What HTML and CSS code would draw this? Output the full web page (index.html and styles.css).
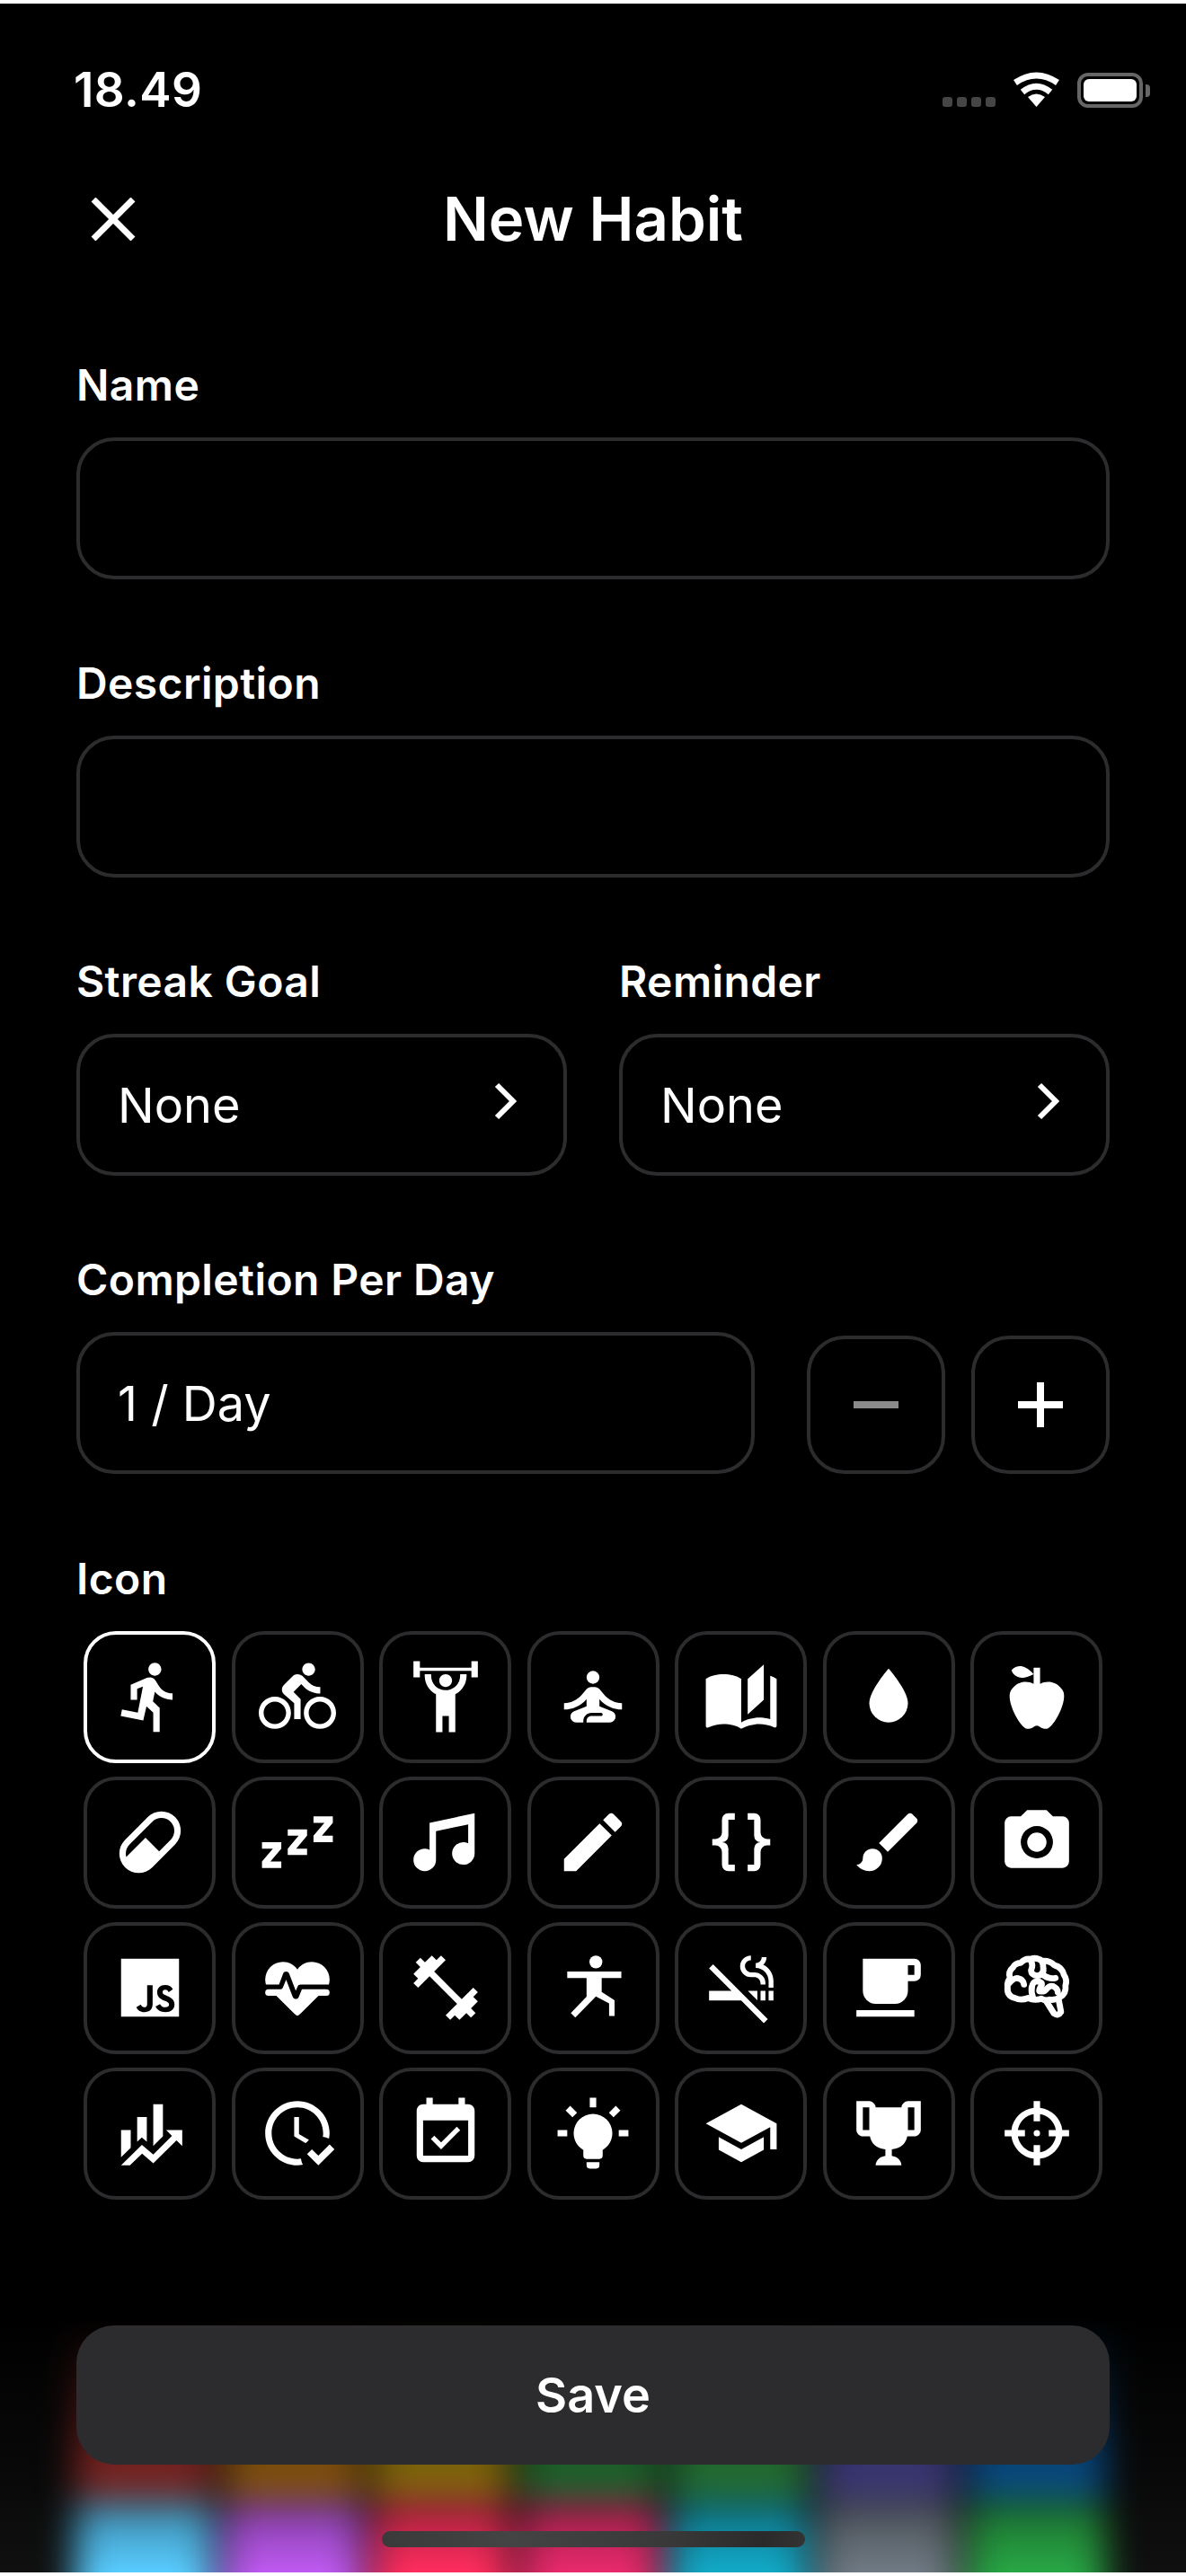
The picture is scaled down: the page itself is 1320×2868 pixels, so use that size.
FILE: index.html
```html
<!DOCTYPE html>
<html lang="en">
<head>
<meta charset="utf-8">
<title>New Habit</title>
<link rel="stylesheet" href="styles.css">
</head>
<body>
<main class="screen">
  <div class="backdrop">
    <div class="swatches">
      <span class="sw c1"></span><span class="sw c2"></span><span class="sw c3"></span><span class="sw c4"></span><span class="sw c5"></span><span class="sw c6"></span><span class="sw c7"></span>
      <span class="sw c8"></span><span class="sw c9"></span><span class="sw c10"></span><span class="sw c11"></span><span class="sw c12"></span><span class="sw c13"></span><span class="sw c14"></span>
    </div>
    <div class="fade"></div>
  </div>

  <header class="status">
    <span class="time">18.49</span>
    <div class="status-icons">
      <div class="signal"><i></i><i></i><i></i><i></i></div>
      <svg class="wifi" viewBox="0 0 53 39"><path class="arc" d="M3 12Q26.500-4 50 12"/><path class="arc" d="M11 22.500Q26.500 10 42 22.500"/><path d="M26.500 39L17 28Q26.500 21 36 28Z"/></svg>
      <div class="battery"><div class="battery-body"><div class="battery-fill"></div></div><div class="battery-nub"></div></div>
    </div>
  </header>

  <div class="navbar">
    <svg class="close" viewBox="0 0 50 48"><path d="M3 2L47 46M47 2L3 46"/></svg>
    <h1 class="title">New Habit</h1>
  </div>

  <form class="form">
    <div class="section">
      <label class="label">Name</label>
      <div class="box"></div>
    </div>
    <div class="section">
      <label class="label">Description</label>
      <div class="box"></div>
    </div>
    <div class="section two-col">
      <div class="col">
        <label class="label">Streak Goal</label>
        <div class="box select"><span>None</span><svg class="chev" viewBox="0 0 26 42"><path d="M4 3L22 21L4 39"/></svg></div>
      </div>
      <div class="col">
        <label class="label">Reminder</label>
        <div class="box select"><span>None</span><svg class="chev" viewBox="0 0 26 42"><path d="M4 3L22 21L4 39"/></svg></div>
      </div>
    </div>
    <div class="section">
      <label class="label">Completion Per Day</label>
      <div class="stepper">
        <div class="box value">1 / Day</div>
        <div class="step"><svg class="sign minus" viewBox="0 0 50 50"><path d="M0 25H50"/></svg></div>
        <div class="step"><svg class="sign" viewBox="0 0 50 50"><path d="M0 25H50M25 0V50"/></svg></div>
      </div>
    </div>
    <div class="section">
      <label class="label">Icon</label>
      <div class="icons">
        <div class="tile selected"><svg viewBox="0 0 24 24"><path d="M13.49 5.48c1.1 0 2-.9 2-2s-.9-2-2-2-2 .9-2 2 .9 2 2 2zm-3.6 13.9l1-4.4 2.1 2v6h2v-7.5l-2.1-2 .6-3c1.3 1.5 3.3 2.5 5.5 2.500v-2c-1.900 0-3.500-1-4.300-2.400l-1-1.600c-.4-.6-1-1-1.700-1-.3 0-.5.1-.8.1l-5.200 2.200v4.700h2v-3.400l1.800-.7-1.600 8.100-4.900-1-.4 2 7 1.400z"/></svg></div>
        <div class="tile"><svg viewBox="0 0 24 24"><path d="M15.5 5.500c1.100 0 2-.9 2-2s-.9-2-2-2-2 .9-2 2 .9 2 2 2zM5 12c-2.800 0-5 2.200-5 5s2.200 5 5 5 5-2.200 5-5-2.200-5-5-5zm0 8.500c-1.900 0-3.500-1.600-3.500-3.500s1.600-3.500 3.500-3.500 3.500 1.600 3.500 3.500-1.600 3.500-3.500 3.500zm5.800-10l2.400-2.400.8.8c1.300 1.300 3 2.100 5.100 2.100V9c-1.500 0-2.700-.6-3.600-1.500l-1.900-1.900c-.5-.4-1-.6-1.600-.6s-1.100.2-1.400.6L7.800 8.400c-.4.4-.6.9-.6 1.400 0 .6.2 1.100.6 1.400L11 14v5h2v-6.200l-2.200-2.300zM19 12c-2.800 0-5 2.200-5 5s2.200 5 5 5 5-2.200 5-5-2.200-5-5-5zm0 8.500c-1.900 0-3.500-1.600-3.500-3.500s1.600-3.500 3.500-3.500 3.500 1.600 3.500 3.500-1.600 3.500-3.500 3.500z"/></svg></div>
        <div class="tile"><svg viewBox="0 0 24 24"><path d="M12 5C10.890 5 10 5.890 10 7S10.890 9 12 9 14 8.110 14 7 13.110 5 12 5M22 1V6H20V4H4V6H2V1H4V3H20V1H22M15 11.260V23H13V18H11V23H9V11.260C6.930 10.170 5.500 8 5.500 5.500L5.500 5H7.500L7.500 5.500C7.500 8 9.500 10 12 10S16.500 8 16.500 5.500L16.500 5H18.500L18.500 5.500C18.500 8 17.070 10.170 15 11.260Z"/></svg></div>
        <div class="tile"><svg viewBox="0 0 24 24"><circle cx="12" cy="6" r="2"/><path d="M21 16v-2c-2.240 0-4.160-.96-5.600-2.680l-1.340-1.600c-.38-.46-.94-.72-1.530-.72h-1.050c-.59 0-1.150.26-1.530.72l-1.340 1.600C7.160 13.040 5.240 14 3 14v2c2.770 0 5.190-1.170 7-3.250V15l-3.880 1.550c-.67.27-1.120.93-1.120 1.650C5 19.200 5.800 20 6.800 20H9v-.5c0-1.380 1.120-2.500 2.500-2.500h3c.28 0 .5.220.5.5s-.22.5-.5.5h-3c-.83 0-1.500.67-1.500 1.500v.5h7.200c1 0 1.800-.8 1.800-1.800 0-.72-.45-1.380-1.120-1.650L14 15v-2.250c1.810 2.080 4.230 3.250 7 3.250z"/></svg></div>
        <div class="tile"><svg viewBox="0 0 24 24"><path d="M19 2L14 6.500V17.500L19 13V2M6.500 5C4.550 5 2.450 5.400 1 6.500V21.160C1 21.410 1.250 21.660 1.500 21.660C1.600 21.660 1.650 21.590 1.750 21.590C3.100 20.940 5.050 20.500 6.500 20.500C8.450 20.500 10.550 20.900 12 22C13.350 21.150 15.800 20.500 17.500 20.500C19.150 20.500 20.850 20.810 22.250 21.560C22.350 21.610 22.400 21.590 22.500 21.590C22.750 21.590 23 21.340 23 21.090V6.500C22.400 6.050 21.750 5.750 21 5.500V19C19.900 18.650 18.700 18.500 17.500 18.500C15.800 18.500 13.350 19.150 12 20V6.500C10.550 5.400 8.450 5 6.500 5Z"/></svg></div>
        <div class="tile"><svg viewBox="0 0 24 24"><path d="M12,20A6,6 0 0,1 6,14C6,10 12,3.250 12,3.250C12,3.250 18,10 18,14A6,6 0 0,1 12,20Z"/></svg></div>
        <div class="tile"><svg viewBox="0 0 24 24"><path d="M20,10C22,13 17,22 15,22C13,22 13,21 12,21C11,21 11,22 9,22C7,22 2,13 4,10C6,7 9,7 11,8V5C5.380,8.070 4.110,3.780 4.110,3.780C4.110,3.780 6.770,0.190 11,5V3H13V8C15,7 18,7 20,10Z"/></svg></div>

        <div class="tile"><svg viewBox="0 0 24 24"><path d="M4.220,11.290L11.290,4.220C13.640,1.880 17.430,1.880 19.780,4.220C22.120,6.560 22.120,10.360 19.780,12.710L12.710,19.780C10.360,22.120 6.560,22.120 4.220,19.780C1.880,17.430 1.880,13.640 4.220,11.290M5.640,12.710C4.590,13.750 4.240,15.240 4.600,16.570L10.590,10.590L14.830,14.830L18.360,11.290C19.930,9.730 19.930,7.200 18.360,5.640C16.800,4.070 14.270,4.070 12.710,5.640L5.640,12.710Z"/></svg></div>
        <div class="tile"><svg viewBox="0 0 24 24"><path d="M23,12H17V10L20.390,6H17V4H23V6L19.620,10H23V12M15,16H9V14L12.390,10H9V8H15V10L11.620,14H15V16M7,20H1V18L4.390,14H1V12H7V14L3.620,18H7V20Z"/></svg></div>
        <div class="tile"><svg viewBox="0 0 24 24"><path d="M21,3V15.500A3.500,3.500 0 0,1 17.500,19A3.500,3.500 0 0,1 14,15.500A3.500,3.500 0 0,1 17.500,12C18.040,12 18.550,12.120 19,12.340V6.470L9,8.600V17.500A3.500,3.500 0 0,1 5.500,21A3.500,3.500 0 0,1 2,17.500A3.500,3.500 0 0,1 5.500,14C6.040,14 6.550,14.120 7,14.340V6L21,3Z"/></svg></div>
        <div class="tile"><svg viewBox="0 0 24 24"><path d="M20.710,7.040C21.100,6.650 21.100,6 20.710,5.630L18.370,3.290C18,2.900 17.350,2.900 16.960,3.290L15.120,5.120L18.870,8.870M3,17.250V21H6.750L17.810,9.930L14.060,6.180L3,17.250Z"/></svg></div>
        <div class="tile"><svg viewBox="0 0 24 24"><path d="M8,3A2,2 0 0,0 6,5V9A2,2 0 0,1 4,11H3V13H4A2,2 0 0,1 6,15V19A2,2 0 0,0 8,21H10V19H8V14A2,2 0 0,0 6,12A2,2 0 0,0 8,10V5H10V3M16,3A2,2 0 0,1 18,5V9A2,2 0 0,0 20,11H21V13H20A2,2 0 0,0 18,15V19A2,2 0 0,1 16,21H14V19H16V14A2,2 0 0,1 18,12A2,2 0 0,1 16,10V5H14V3H16Z"/></svg></div>
        <div class="tile"><svg viewBox="0 0 24 24"><path d="M20.710,4.630L19.370,3.290C19,2.900 18.350,2.900 17.960,3.290L9,12.250L11.750,15L20.710,6.040C21.100,5.650 21.100,5 20.710,4.630M7,14A3,3 0 0,0 4,17C4,18.310 2.840,19 2,19C2.920,20.220 4.500,21 6,21A4,4 0 0,0 10,17A3,3 0 0,0 7,14Z"/></svg></div>
        <div class="tile"><svg viewBox="0 0 24 24"><path d="M4,4H7L9,2H15L17,4H20A2,2 0 0,1 22,6V18A2,2 0 0,1 20,20H4A2,2 0 0,1 2,18V6A2,2 0 0,1 4,4M12,7A5,5 0 0,0 7,12A5,5 0 0,0 12,17A5,5 0 0,0 17,12A5,5 0 0,0 12,7M12,9A3,3 0 0,1 15,12A3,3 0 0,1 12,15A3,3 0 0,1 9,12A3,3 0 0,1 12,9Z"/></svg></div>

        <div class="tile"><svg viewBox="0 0 24 24"><path d="M3,3H21V21H3V3M7.730,18.040C8.130,18.890 8.920,19.590 10.270,19.590C11.770,19.590 12.800,18.790 12.800,17.040V11.260H11.100V17C11.100,17.860 10.750,18.080 10.200,18.080C9.620,18.080 9.380,17.680 9.120,17.220L7.730,18.040M13.710,17.860C14.210,18.840 15.220,19.590 16.800,19.590C18.400,19.590 19.600,18.760 19.600,17.230C19.600,15.820 18.790,15.190 17.350,14.570L16.930,14.390C16.200,14.080 15.890,13.870 15.890,13.370C15.890,12.960 16.200,12.640 16.700,12.640C17.180,12.640 17.500,12.850 17.790,13.370L19.100,12.500C18.550,11.540 17.770,11.170 16.700,11.170C15.190,11.170 14.220,12.130 14.220,13.400C14.220,14.780 15.030,15.430 16.250,15.950L16.670,16.130C17.450,16.470 17.910,16.680 17.910,17.260C17.910,17.740 17.460,18.090 16.760,18.090C15.930,18.090 15.450,17.660 15.090,17.060L13.710,17.860Z"/></svg></div>
        <div class="tile"><svg viewBox="0 0 24 24"><path d="M7.500,4A5.500,5.500 0 0,0 2,9.500C2,10 2.090,10.500 2.220,11H6.300L7.570,7.630C7.870,6.830 9.050,6.750 9.430,7.630L11.500,13L12.090,11.580C12.220,11.250 12.570,11 13,11H21.780C21.910,10.500 22,10 22,9.500A5.500,5.500 0 0,0 16.500,4C14.640,4 13,4.930 12,6.340C11,4.930 9.360,4 7.500,4V4M3,12.500A1,1 0 0,0 2,13.500A1,1 0 0,0 3,14.500H5.440L11,20C12,20.900 12,20.900 13,20L18.560,14.500H21A1,1 0 0,0 22,13.500A1,1 0 0,0 21,12.500H13.400L12.470,14.800C12.070,15.810 10.920,15.670 10.550,14.830L8.500,9.500L7.540,11.830C7.390,12.210 7.050,12.500 6.600,12.500H3Z"/></svg></div>
        <div class="tile"><svg viewBox="0 0 24 24"><path d="M20.570,14.860L22,13.430L20.570,12L17,15.570L8.430,7L12,3.430L10.570,2L9.140,3.430L7.710,2L5.570,4.140L4.140,2.710L2.710,4.140L4.140,5.570L2,7.710L3.430,9.140L2,10.570L3.430,12L7,8.430L15.570,17L12,20.570L13.430,22L14.860,20.570L16.290,22L18.430,19.860L19.860,21.290L21.290,19.860L19.860,18.430L22,16.290L20.570,14.860Z"/></svg></div>
        <div class="tile"><svg viewBox="0 0 24 24"><circle cx="12.900" cy="4" r="2"/><path d="M4 7H20.800V9H14.700V13.300L18.700 15.900V20.800H17V16.900L12.900 14.700L6.500 21.300L5.100 19.900L10 14.800V9H4Z"/></svg></div>
        <div class="tile"><svg viewBox="0 0 24 24"><path d="M2 6l6.990 7H2v3h9.990l7 7 1.260-1.250-17-17zm18.500 7H22v3h-1.500zM18 13h1.500v3H18zm.85-8.120c.62-.61 1-1.450 1-2.380h-1.500c0 1.020-.83 1.850-1.850 1.850v1.500c2.240 0 4 1.830 4 4.070V12H22V9.920c0-2.230-1.280-4.150-3.150-5.040zM14.500 8.700h1.530c1.050 0 1.970.74 1.970 2.050V11h1.500v-.59c0-1.800-1.600-3.160-3.470-3.160H15c-1.020 0-1.850-.98-1.850-2s.83-1.750 1.850-1.750V2a3.350 3.350 0 0 0 0 6.700zm2.500 7.230V13h-2.930z"/></svg></div>
        <div class="tile"><svg viewBox="0 0 24 24"><path d="M2,21H20V19H2M20,8H18V5H20M20,3H4V13A4,4 0 0,0 8,17H14A4,4 0 0,0 18,13V10H20A2,2 0 0,0 22,8V5C22,3.890 21.100,3 20,3Z"/></svg></div>
        <div class="tile"><svg class="line" viewBox="0 0 24 24"><path d="M5.200 15.200Q2.600 14.600 2.900 11.800Q2.700 10 3.700 9.100Q2.900 7.100 4.600 5.700Q5.200 4.400 7 4.300Q8.200 2.900 10 3.100Q11.900 2.400 13.600 3.700Q16 3.500 17.400 5Q19.800 5.600 20.400 8Q21.500 9.600 20.900 11.300Q21.200 13.900 19.200 14.900Q17.800 16 16 15.700Q14.800 16.200 13.400 15.400Q11.200 16.200 9.300 15.200Q7 16.100 5.200 15.200Z"/><path d="M14.800 16L17.300 20Q18.600 21 19.500 19.500L18.700 15.300"/><path d="M10 3.300Q11 5 10.200 6.600Q10.300 8.100 12.200 8.300Q14.200 8 14 6Q14 4.600 13.600 3.800"/><path d="M13.800 8Q16 9.500 17.800 9"/><path d="M10.400 12Q10.700 10.200 11.800 10.100Q13.800 10 13.500 11.200Q12.500 12.600 12.800 13.100Q14.300 13.400 15 12.400Q16 11.300 16.900 11.500Q18.500 12.200 18.500 13.400"/><path d="M10.400 12Q10.200 13.800 10.800 15"/><path d="M3.400 10.600Q5 8.800 6.200 9.100Q7.800 9.400 8 11"/></svg></div>

        <div class="tile"><svg viewBox="0 0 24 24"><path d="M6,16.500L3,19.440V11H6M11,14.660L9.430,13.320L8,14.640V7H11M16,13L13,16V3H16M18.810,12.810L17,11H22V16L20.210,14.210L13,21.360L9.530,18.340L5.750,22H3L9.470,15.660L13,18.640"/></svg></div>
        <div class="tile"><svg viewBox="0 0 24 24"><path d="M23.500 17L18.500 22L15 18.500L16.500 17L18.500 19L22 15.500L23.500 17M13.100 19.900C12.700 20 12.400 20 12 20C7.600 20 4 16.400 4 12S7.600 4 12 4 20 7.600 20 12C20 12.400 20 12.700 19.900 13.100C20.600 13.200 21.200 13.400 21.800 13.700C21.900 13.100 22 12.600 22 12C22 6.500 17.500 2 12 2S2 6.500 2 12C2 17.500 6.500 22 12 22C12.600 22 13.200 21.900 13.700 21.800C13.400 21.300 13.200 20.600 13.100 19.900M15.600 14.100L12.500 12.300V7H11V13L14.500 15.100C14.800 15 15.200 14.500 15.600 14.100Z"/></svg></div>
        <div class="tile"><svg viewBox="0 0 24 24"><path d="M19,19H5V8H19M19,3H18V1H16V3H8V1H6V3H5C3.890,3 3,3.900 3,5V19A2,2 0 0,0 5,21H19A2,2 0 0,0 21,19V5A2,2 0 0,0 19,3M16.530,11.060L15.470,10L10.590,14.880L8.470,12.760L7.410,13.820L10.590,17L16.530,11.060Z"/></svg></div>
        <div class="tile"><svg viewBox="0 0 24 24"><path d="M12,6A6,6 0 0,1 18,12C18,14.220 16.790,16.160 15,17.200V19A1,1 0 0,1 14,20H10A1,1 0 0,1 9,19V17.200C7.210,16.160 6,14.220 6,12A6,6 0 0,1 12,6M14,21V22A1,1 0 0,1 13,23H11A1,1 0 0,1 10,22V21H14M20,11H23V13H20V11M1,11H4V13H1V11M13,1V4H11V1H13M4.920,3.500L7.050,5.640L5.630,7.050L3.500,4.930L4.920,3.500M16.950,5.630L19.070,3.500L20.500,4.930L18.370,7.050L16.950,5.630Z"/></svg></div>
        <div class="tile"><svg viewBox="0 0 24 24"><path d="M12,3L1,9L12,15L21,10.090V17H23V9M5,13.180V17.180L12,21L19,17.180V13.180L12,17L5,13.180Z"/></svg></div>
        <div class="tile"><svg viewBox="0 0 24 24"><path d="M20.200,2H19.500H18C17.100,2 16,3 16,4H8C8,3 6.900,2 6,2H4.500H3.800H2V11C2,12 3,13 4,13H6.200C6.600,15 7.900,16.700 11,17V19.080C8,19.540 8,22 8,22H16C16,22 16,19.540 13,19.080V17C16.100,16.700 17.400,15 17.800,13H20C21,13 22,12 22,11V2H20.200M4,11V4H6V6V11C5.100,11 4.300,11 4,11M20,11C19.700,11 18.900,11 18,11V6V4H20V11Z"/></svg></div>
        <div class="tile"><svg viewBox="0 0 24 24"><path fill-rule="evenodd" d="M11 2H13V4.100A8 8 0 0 1 19.900 11H22V13H19.900A8 8 0 0 1 13 19.900V22H11V19.900A8 8 0 0 1 4.100 13H2V11H4.100A8 8 0 0 1 11 4.100ZM11 6.100A6 6 0 0 0 6.100 11H8.300V13H6.100A6 6 0 0 0 11 17.900V15.700H13V17.900A6 6 0 0 0 17.900 13H15.700V11H17.900A6 6 0 0 0 13 6.100V8.300H11Z"/><circle cx="12" cy="12" r="1"/></svg></div>
      </div>
    </div>
  </form>

  <button class="save" type="button">Save</button>
  <div class="home"></div>
</main>
</body>
</html>
```
FILE: styles.css
```css
* { box-sizing: border-box; }

html, body { margin: 0; padding: 0; background: #fff; }

body { font-family: Inter, "Liberation Sans", sans-serif; color: #fff; }

.screen {
  position: relative;
  height: 2860px;
  margin: 4px 0;
  background: #000;
  overflow: hidden;
}

/* blurred list peeking under the sheet */
.backdrop {
  position: absolute;
  left: 0;
  right: 0;
  bottom: 0;
  height: 284px;
  overflow: hidden;
  background: #101010;
}

.swatches {
  position: absolute;
  left: 84px;
  top: 0;
  width: 1146px;
  display: grid;
  grid-template-columns: repeat(7, 152px);
  grid-template-rows: 196px 180px;
  justify-content: space-between;
  row-gap: 8px;
  filter: blur(20px);
}

.sw { display: block; }
.c1 { background: #ee4540; }
.c2 { background: #ff9f16; }
.c3 { background: #ffcc14; }
.c4 { background: #38c656; }
.c5 { background: #46d860; }
.c6 { background: #726ae6; }
.c7 { background: #1090ff; }
.c8 { background: #58ccff; }
.c9 { background: #bf5af2; }
.c10 { background: #ff2d5f; }
.c11 { background: #e92a6c; }
.c12 { background: #12aac8; }
.c13 { background: #707a84; }
.c14 { background: #28a745; }

.fade {
  position: absolute;
  inset: 0;
  background: linear-gradient(to bottom, #000 0%, rgba(0, 0, 0, 0.48) 61%, rgba(0, 0, 0, 0) 100%);
}

.status {
  position: relative;
  height: 146px;
  padding: 70px 40px 0 82px;
  display: flex;
  justify-content: space-between;
  align-items: flex-start;
}

.time {
  font-size: 53px;
  line-height: 53px;
  font-weight: 600;
  letter-spacing: 0.4px;
}

.status-icons {
  display: flex;
  align-items: flex-end;
  gap: 19px;
  margin-top: 6px;
  height: 40px;
}

.signal { display: flex; gap: 5px; margin-bottom: 1px; }
.signal i { width: 11px; height: 11px; border-radius: 3px; background: #454545; }

.wifi { width: 53px; height: 39px; display: block; margin-bottom: 1px; fill: #fff; }
.wifi .arc { fill: none; stroke: #fff; stroke-width: 7; }

.battery { display: flex; align-items: center; gap: 3px; }
.battery-body {
  width: 73px;
  height: 39px;
  padding: 3px;
  border: 4px solid #666;
  border-radius: 12px;
}
.battery-fill { width: 100%; height: 100%; background: #fff; border-radius: 6px; }
.battery-nub { width: 5px; height: 14px; background: #666; border-radius: 0 4px 4px 0; }

.navbar {
  position: relative;
  height: 188px;
  display: flex;
  align-items: center;
  justify-content: center;
}

.close {
  position: absolute;
  left: 101px;
  top: 70px;
  width: 50px;
  height: 48px;
  fill: none;
  stroke: #fff;
  stroke-width: 7;
}

.title {
  margin: 0;
  font-size: 67px;
  line-height: 76px;
  font-weight: 600;
  letter-spacing: 0;
}

.form {
  position: relative;
  padding: 61.500px 85px 0;
  display: flex;
  flex-direction: column;
  gap: 87.330px;
}

.label {
  display: block;
  height: 58px;
  margin-bottom: 29px;
  font-size: 48px;
  line-height: 58px;
  font-weight: 600;
  letter-spacing: 0.4px;
}

.box {
  height: 158px;
  border: 4px solid #2c2c2e;
  border-radius: 42px;
}

.two-col { display: flex; gap: 58px; }
.col { flex: 1 1 0; min-width: 0; }

.select, .value {
  display: flex;
  align-items: center;
  justify-content: space-between;
  padding: 0 52px 0 42px;
  font-size: 54px;
  letter-spacing: 0;
}

.chev {
  width: 26px;
  height: 42px;
  margin-top: -8px;
  fill: none;
  stroke: #fff;
  stroke-width: 6;
}

.stepper { display: flex; align-items: flex-end; }
.value { flex: 0 0 755px; }

.step {
  flex: 0 0 154px;
  height: 154px;
  margin-left: 29px;
  border: 4px solid #2c2c2e;
  border-radius: 42px;
  display: flex;
  align-items: center;
  justify-content: center;
}
.step:nth-child(2) { margin-left: 58px; }

.sign { width: 50px; height: 50px; fill: none; stroke: #fff; stroke-width: 8; }
.sign.minus { stroke: #8a8a8a; }

.icons {
  display: grid;
  grid-template-columns: repeat(7, 147px);
  justify-content: space-between;
  row-gap: 15px;
  padding: 0 8px;
}

.tile {
  height: 147px;
  border: 4px solid #2c2c2e;
  border-radius: 36px;
  display: flex;
  align-items: center;
  justify-content: center;
}
.tile.selected { border-color: #fff; }
.tile svg { width: 86px; height: 86px; fill: #fff; }
.tile svg.line { fill: none; stroke: #fff; stroke-width: 1.900; stroke-linecap: round; stroke-linejoin: round; }

.save {
  position: relative;
  display: block;
  width: 1150px;
  height: 155px;
  margin: 140px 85px 0;
  border: 0;
  border-radius: 42px;
  background: #2c2c2e;
  color: #fff;
  font-family: inherit;
  font-size: 54px;
  font-weight: 600;
  letter-spacing: 0;
}

.home {
  position: absolute;
  left: 425px;
  top: 2814px;
  width: 471px;
  height: 18px;
  border-radius: 9px;
  background: linear-gradient(to right, #3a3a3a 0%, #444 30%, #383838 70%, #2a2a2a 90%, #333 100%);
}
```
